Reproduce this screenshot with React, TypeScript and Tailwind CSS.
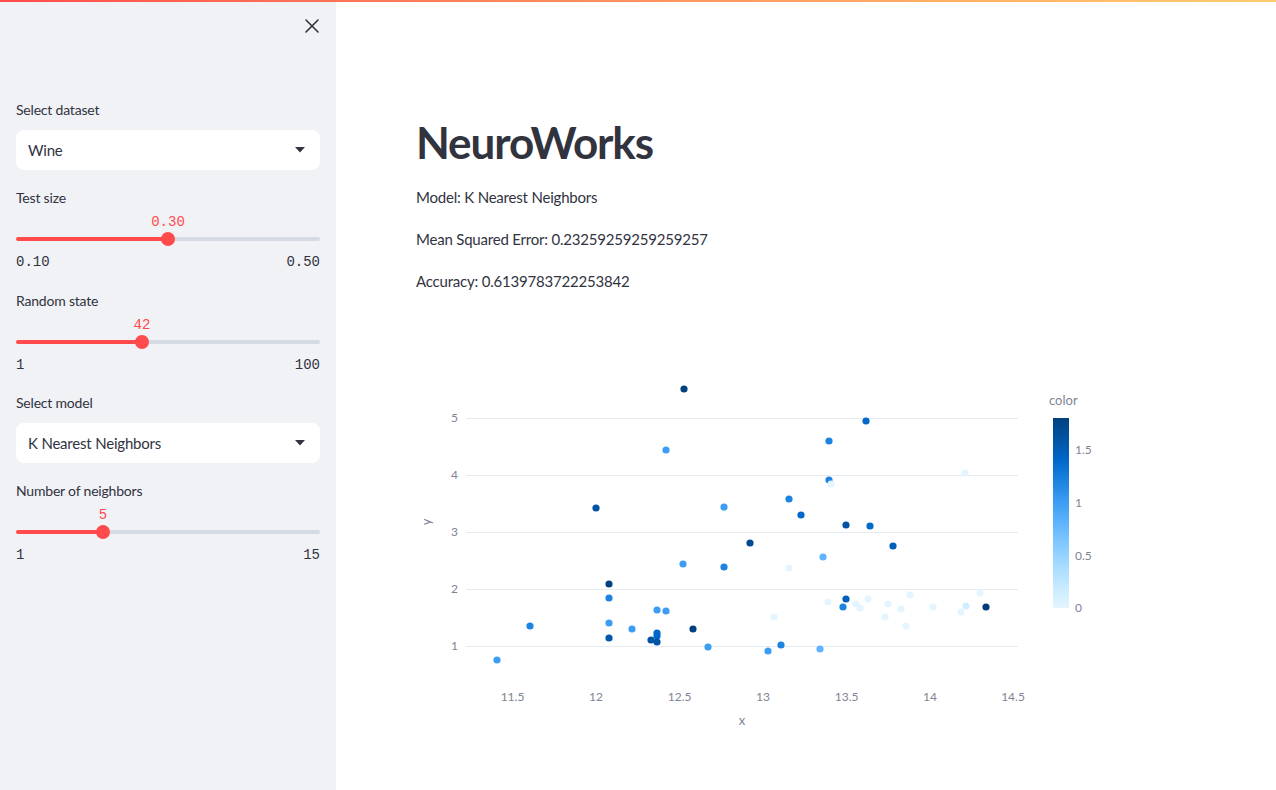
import { X } from "lucide-react"

const pts: [number, number, string][] = [
  [684, 389, "#004280"], [666, 450, "#3d9df3"], [596, 508, "#0054a3"], [724, 507, "#3d9df3"],
  [866, 421, "#0068c9"], [829, 441, "#1c83e1"], [829, 480, "#1c83e1"], [831, 484, "#e4f5ff"],
  [965, 473, "#e4f5ff"], [789, 499, "#1c83e1"], [801, 515, "#0068c9"], [846, 525, "#0054a3"],
  [870, 526, "#0068c9"], [750, 543, "#004a92"], [683, 564, "#3d9df3"], [724, 567, "#1c83e1"],
  [893, 546, "#0060bb"], [823, 557, "#60b4ff"], [789, 568, "#e4f5ff"], [609, 584, "#004280"],
  [609, 598, "#1c83e1"], [657, 610, "#3d9df3"], [666, 611, "#3d9df3"], [530, 626, "#1c83e1"],
  [609, 623, "#3d9df3"], [632, 629, "#3d9df3"], [693, 629, "#004280"], [657, 633, "#0068c9"],
  [657, 636, "#0068c9"], [657, 642, "#0054a3"], [609, 638, "#0058ab"], [651, 640, "#0054a3"],
  [708, 647, "#3d9df3"], [497, 660, "#3d9df3"], [910, 595, "#e4f5ff"], [980, 593, "#e4f5ff"],
  [828, 602, "#e4f5ff"], [856, 604, "#e4f5ff"], [860, 608, "#e4f5ff"], [868, 599, "#e4f5ff"],
  [888, 604, "#e4f5ff"], [901, 609, "#e4f5ff"], [933, 607, "#e4f5ff"], [966, 606, "#d0eeff"],
  [961, 612, "#e4f5ff"], [774, 617, "#e4f5ff"], [885, 617, "#e4f5ff"], [906, 626, "#e4f5ff"],
  [846, 599, "#0060bb"], [843, 607, "#1c83e1"], [986, 607, "#003d78"], [781, 645, "#1c83e1"],
  [768, 651, "#3d9df3"], [820, 649, "#60b4ff"],
]

const scale = ["#e4f5ff", "#c7ebff", "#a6dcff", "#83c9ff", "#60b4ff", "#3d9df3", "#1c83e1", "#0068c9", "#0054a3", "#004280"]

const Select = ({ label, value, top }: { label: string; value: string; top: string }) => (
  <div className={top}>
    <div className="text-sm leading-5 tracking-[-0.2px]">{label}</div>
    <div className="mt-[10px] h-10 bg-white rounded-lg flex items-center justify-between pl-3 pr-[15px] text-[15px] tracking-[-0.2px]">
      <span>{value}</span>
      <svg width="10" height="6" viewBox="0 0 10 6"><path d="M0 0 L10 0 L5 5.5 Z" fill="#31333f" /></svg>
    </div>
  </div>
)

const Slider = ({ label, value, min, max, pct, top }: { label: string; value: string; min: string; max: string; pct: number; top: string }) => (
  <div className={top}>
    <div className="text-sm leading-5 tracking-[-0.2px]">{label}</div>
    <div className="relative h-5 mt-1 font-['Liberation_Mono',monospace] text-sm text-[#ff4b4b]">
      <span className="absolute top-0 -translate-x-1/2 leading-5" style={{ left: pct + "%" }}>{value}</span>
    </div>
    <div className="relative h-[14px] flex items-center">
      <div className="h-1 bg-[#ff4b4b] rounded-l" style={{ width: pct + "%" }}></div>
      <div className="h-1 flex-1 bg-[#d5dae5] rounded-r"></div>
      <div className="absolute w-[14px] h-[14px] rounded-full bg-[#ff4b4b] -translate-x-1/2" style={{ left: pct + "%" }}></div>
    </div>
    <div className="mt-[6px] flex justify-between font-['Liberation_Mono',monospace] text-sm leading-5">
      <span>{min}</span>
      <span>{max}</span>
    </div>
  </div>
)

const Chart = () => (
  <svg width="760" height="420" viewBox="416 340 760 420" className="block font-['Lato',sans-serif]">
    <defs>
      <linearGradient id="cb" x1="0" y1="1" x2="0" y2="0">
        {scale.map((c, i) => <stop key={i} offset={i / 9} stopColor={c} />)}
      </linearGradient>
    </defs>
    {[418, 475, 532, 589, 646].map((y) => (
      <line key={y} x1="466" x2="1018" y1={y + 0.5} y2={y + 0.5} stroke="#e6eaf1" strokeWidth="1" />
    ))}
    {[["5", 418], ["4", 475], ["3", 532], ["2", 589], ["1", 646]].map(([t, y]) => (
      <text key={t} x="458" y={Number(y) + 4} textAnchor="end" fontSize="12" fill="#808495">{t}</text>
    ))}
    {[["11.5", 512.5], ["12", 596], ["12.5", 679.7], ["13", 763], ["13.5", 846.6], ["14", 930], ["14.5", 1013]].map(([t, x]) => (
      <text key={t} x={x} y="701" textAnchor="middle" fontSize="12" fill="#808495">{t}</text>
    ))}
    <text x="742" y="725" textAnchor="middle" fontSize="13" fill="#808495">x</text>
    <text x="0" y="0" textAnchor="middle" fontSize="13" fill="#808495" transform="translate(431 522) rotate(-90)">y</text>
    {pts.map(([x, y, c], i) => (
      <circle key={i} cx={x} cy={y} r="3.6" fill={c} />
    ))}
    <text x="1049" y="405" fontSize="13" fill="#808495">color</text>
    <rect x="1053" y="418" width="16" height="190" fill="url(#cb)" />
    {[["1.5", 450], ["1", 503], ["0.5", 556], ["0", 608]].map(([t, y]) => (
      <text key={t} x="1075" y={Number(y) + 4} fontSize="12" fill="#808495">{t}</text>
    ))}
  </svg>
)

export default function App() {
  return (
    <div className="relative flex w-full h-[790px] bg-white text-[#31333f] font-['Lato',sans-serif] overflow-hidden">
      <div className="absolute z-10 top-0 left-0 right-0 h-[2px] bg-gradient-to-r from-[#ff4b4b] to-[#ffcc70]"></div>
      <aside className="w-[336px] shrink-0 h-full bg-[#f0f2f6] px-4 pt-[100px] relative">
        <button className="absolute top-[14px] right-[12px] w-6 h-6 flex items-center justify-center text-[#31333f]">
          <X size={24} strokeWidth={1.6} />
        </button>
        <Select label="Select dataset" value="Wine" top="" />
        <Slider label="Test size" value="0.30" min="0.10" max="0.50" pct={50} top="mt-[18px]" />
        <Slider label="Random state" value="42" min="1" max="100" pct={(41 / 99) * 100} top="mt-[19px]" />
        <Select label="Select model" value="K Nearest Neighbors" top="mt-[18px]" />
        <Slider label="Number of neighbors" value="5" min="1" max="15" pct={(4 / 14) * 100} top="mt-[18px]" />
      </aside>
      <main className="flex-1 pl-20 pt-[116px]">
        <h1 className="text-[44px] leading-[1.2] font-bold tracking-tight">NeuroWorks</h1>
        <p className="mt-4 text-[15px] leading-6 tracking-[-0.2px]">Model: K Nearest Neighbors</p>
        <p className="mt-[18px] text-[15px] leading-6 tracking-[-0.2px]">Mean Squared Error: 0.23259259259259257</p>
        <p className="mt-[18px] text-[15px] leading-6 tracking-[-0.2px]">Accuracy: 0.6139783722253842</p>
        <div className="mt-[47px]">
          <Chart />
        </div>
      </main>
    </div>
  )
}
